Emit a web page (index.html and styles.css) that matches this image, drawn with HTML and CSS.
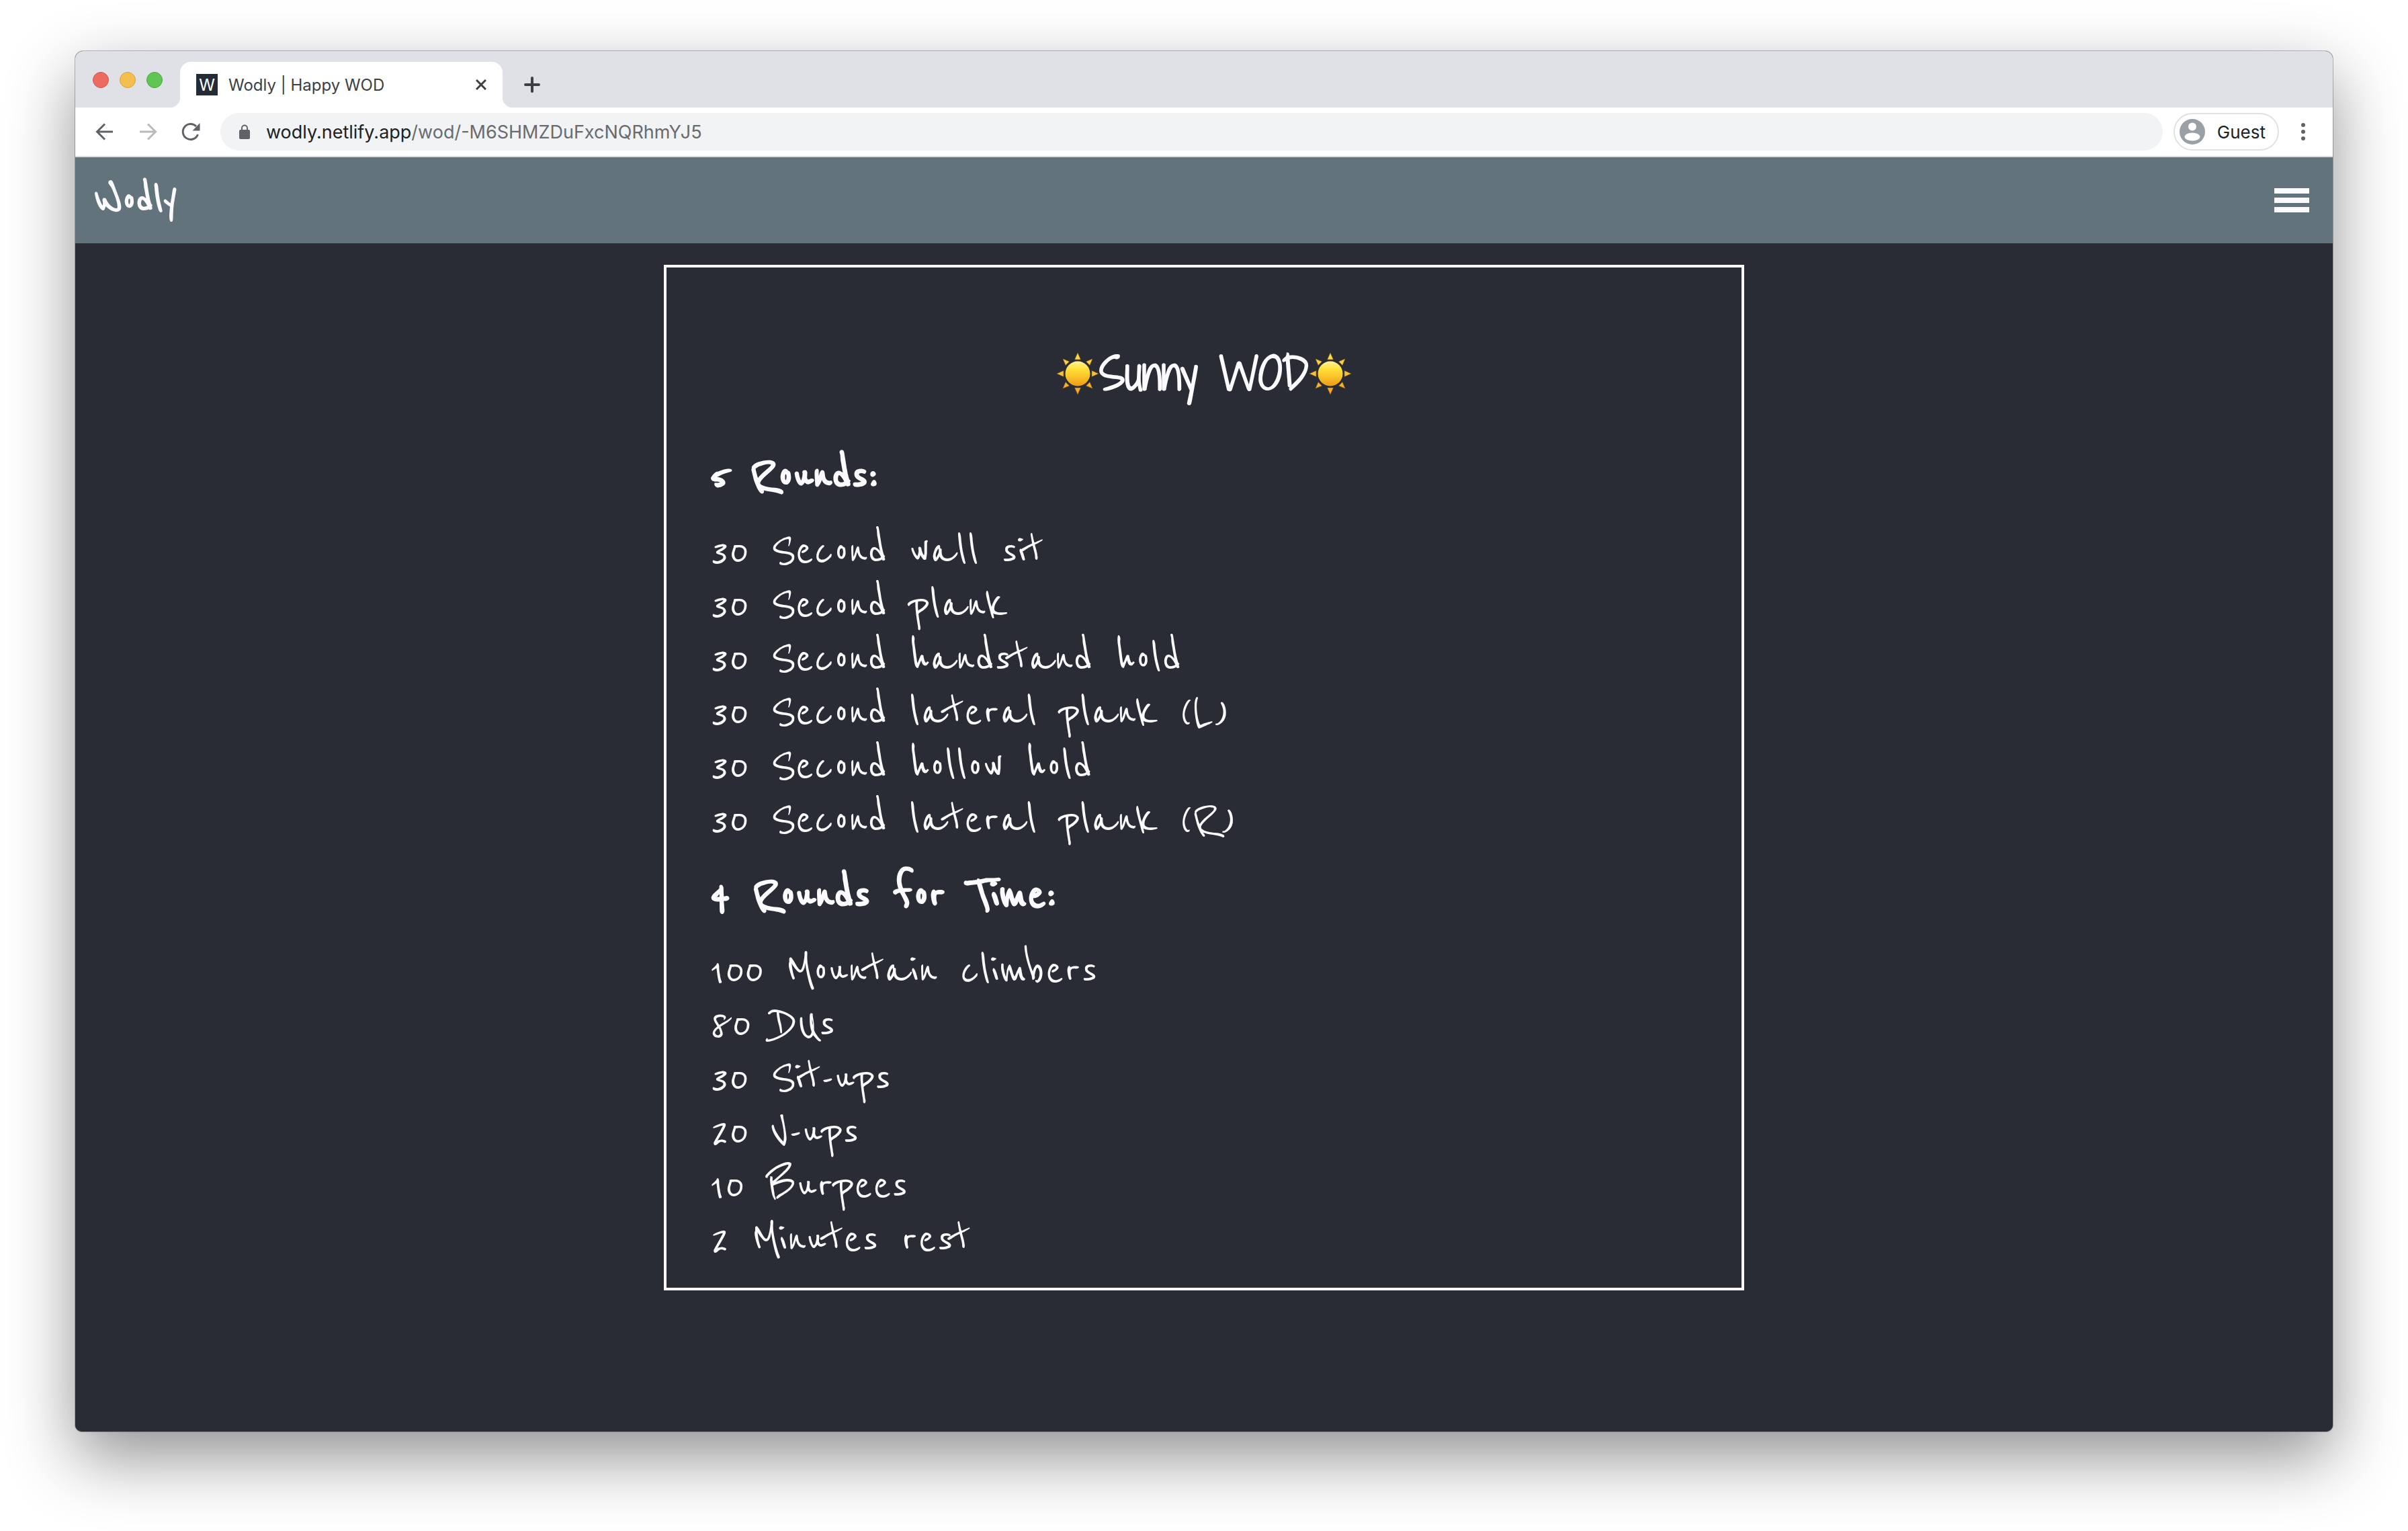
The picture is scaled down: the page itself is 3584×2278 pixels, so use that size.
FILE: index.html
```html
<!DOCTYPE html>
<html lang="en">
<head>
<meta charset="utf-8">
<title>Wodly | Happy WOD</title>
<link rel="stylesheet" href="styles.css">
</head>
<body>
<svg class="defs" aria-hidden="true">
  <defs>
    <linearGradient id="disc" x1="0" y1="0" x2="0" y2="1">
      <stop offset="0" stop-color="#fff3a0"/>
      <stop offset=".3" stop-color="#ffe13a"/>
      <stop offset=".6" stop-color="#fcc62c"/>
      <stop offset="1" stop-color="#ec9a17"/>
    </linearGradient>
    <linearGradient id="rays" gradientUnits="userSpaceOnUse" x1="0" y1="0" x2="0" y2="64">
      <stop offset="0" stop-color="#fde047"/>
      <stop offset="1" stop-color="#f3a02c"/>
    </linearGradient>
    <symbol id="sun" viewBox="0 0 64 64">
      <path fill="url(#rays)" stroke="#8a5a10" stroke-width=".6" d="M32 1l4.500 10h-9zM32 63l4.500-10h-9zM1 32l10-4.500v9zM63 32l-10-4.500v9zM10 10l9.500 4-5.500 5.500zM54 10l-9.500 4 5.500 5.500zM10 54l9.500-4-5.500-5.500zM54 54l-9.500-4 5.500-5.500z"/>
      <circle cx="32" cy="32" r="18.500" fill="url(#disc)"/>
    </symbol>
  </defs>
</svg>
<div class="window">
  <div class="tabstrip">
    <div class="lights">
      <button class="light light-close" aria-label="Close window"></button>
      <button class="light light-min" aria-label="Minimise window"></button>
      <button class="light light-max" aria-label="Zoom window"></button>
    </div>
    <div class="tab">
      <span class="favicon">W</span>
      <span class="tab-title">Wodly | Happy WOD</span>
      <button class="icon-button" aria-label="Close tab">
        <svg width="16" height="16" viewBox="0 0 16 16"><path d="M1 1l14 14M15 1L1 15" stroke="#3c4043" stroke-width="3"/></svg>
      </button>
    </div>
    <button class="icon-button new-tab" aria-label="New tab">
      <svg width="24" height="24" viewBox="0 0 24 24"><path d="M12 2v20M2 12h20" stroke="#3c4043" stroke-width="4" stroke-linecap="round"/></svg>
    </button>
  </div>
  <div class="toolbar">
    <div class="nav">
      <button class="icon-button" aria-label="Back">
        <svg width="32" height="32" viewBox="0 0 32 32"><path d="M28 16H5M16 4.500L4.500 16L16 27.500" fill="none" stroke="#5f6368" stroke-width="3"/></svg>
      </button>
      <button class="icon-button" aria-label="Forward" disabled>
        <svg width="32" height="32" viewBox="0 0 32 32"><path d="M4 16h23M16 4.500L27.500 16L16 27.500" fill="none" stroke="#bababc" stroke-width="3"/></svg>
      </button>
      <button class="icon-button" aria-label="Reload">
        <svg width="32" height="32" viewBox="0 0 32 32"><path d="M26.500 20A11.500 11.500 0 1 1 24 8" fill="none" stroke="#5f6368" stroke-width="3"/><path d="M29.500 3v11.500H18.500z" fill="#5f6368"/></svg>
      </button>
    </div>
    <div class="omnibox">
      <svg width="16" height="22" viewBox="0 0 16 22"><path d="M4 9V5.500a4 4 0 0 1 8 0V9" fill="none" stroke="#5f6368" stroke-width="2"/><rect y="8" width="16" height="14" rx="2" fill="#5f6368"/></svg>
      <a class="url" href="#">wodly.netlify.app<span class="url-path">/wod/-M6SHMZDuFxcNQRhmYJ5</span></a>
    </div>
    <button class="profile">
      <svg width="38" height="38" viewBox="0 0 38 38"><circle cx="19" cy="19" r="19" fill="#9aa0a6"/><circle cx="19" cy="11.500" r="6" fill="#fff"/><ellipse cx="19" cy="26.500" rx="11.500" ry="6" fill="#fff"/></svg>
      Guest
    </button>
    <button class="icon-button" aria-label="Menu">
      <svg width="8" height="28" viewBox="0 0 8 28" fill="#5f6368"><circle cx="4" cy="4" r="3"/><circle cx="4" cy="14" r="3"/><circle cx="4" cy="24" r="3"/></svg>
    </button>
  </div>
  <header class="app-bar">
    <a class="brand" href="#">Wodly</a>
    <button class="hamburger" aria-label="Open navigation"><span></span><span></span><span></span></button>
  </header>
  <main class="page">
    <article class="wod">
      <h1><svg class="sun"><use href="#sun"/></svg>Sunny WOD<svg class="sun"><use href="#sun"/></svg></h1>
      <section>
        <h2>5 Rounds:</h2>
        <ul>
          <li>30 Second wall sit</li>
          <li>30 Second plank</li>
          <li>30 Second handstand hold</li>
          <li>30 Second lateral plank (L)</li>
          <li>30 Second hollow hold</li>
          <li>30 Second lateral plank (R)</li>
        </ul>
      </section>
      <section>
        <h2>4 Rounds for Time:</h2>
        <ul>
          <li>100 Mountain climbers</li>
          <li>80 DUs</li>
          <li>30 Sit-ups</li>
          <li>20 V-ups</li>
          <li>10 Burpees</li>
          <li>2 Minutes rest</li>
        </ul>
      </section>
    </article>
  </main>
</div>
</body>
</html>
```
FILE: styles.css
```css
* { box-sizing: border-box; }

body {
  margin: 0;
  padding: 76px 112px 148px;
  min-height: 100vh;
  display: flex;
  background: #fff;
  font-family: Inter, "Liberation Sans", sans-serif;
}

button {
  margin: 0;
  padding: 0;
  border: 0;
  background: none;
  font: inherit;
  color: inherit;
}

a { color: inherit; text-decoration: none; }

svg { display: block; flex: none; }

.defs { position: absolute; width: 0; height: 0; }

.window {
  flex: 1;
  display: flex;
  flex-direction: column;
  border-radius: 12px 12px 10px 10px;
  overflow: hidden;
  background: #292c35;
  box-shadow: 0 0 0 1px rgba(0, 0, 0, .25), 0 38px 100px rgba(0, 0, 0, .44);
}

/* Browser tab strip */
.tabstrip {
  display: flex;
  align-items: flex-end;
  height: 84px;
  padding-left: 26px;
  background: #dfe1e6;
}

.lights {
  display: flex;
  gap: 16px;
  padding-bottom: 29px;
  margin-right: 26px;
}

.light { width: 24px; height: 24px; border-radius: 50%; }
.light-close { background: #ed6a5e; border: 1px solid #d5554a; }
.light-min { background: #f5bf4f; border: 1px solid #d9a13c; }
.light-max { background: #61c554; border: 1px solid #4ba73f; }

.tab {
  position: relative;
  display: flex;
  align-items: center;
  width: 480px;
  height: 68px;
  padding: 0 24px;
  border-radius: 16px 16px 0 0;
  background: #fff;
}

/* Outward curves at the foot of the tab */
.tab::before,
.tab::after {
  content: "";
  position: absolute;
  bottom: 0;
  width: 16px;
  height: 16px;
}
.tab::before { left: -16px; background: radial-gradient(circle at 0 0, transparent 16px, #fff 17px); }
.tab::after { right: -16px; background: radial-gradient(circle at 100% 0, transparent 16px, #fff 17px); }

.favicon {
  width: 32px;
  height: 32px;
  background: #232c36;
  color: #fff;
  font-size: 24px;
  line-height: 34px;
  text-align: center;
}

.tab-title { flex: 1; margin-left: 16px; font-size: 24px; color: #3c4043; }

.icon-button { display: flex; align-items: center; justify-content: center; }

.new-tab { height: 68px; margin-left: 32px; }

/* Browser toolbar */
.toolbar {
  display: flex;
  align-items: center;
  height: 74px;
  padding: 0 40px 0 28px;
  gap: 16px;
  background: #fff;
  border-bottom: 2px solid #d9dcdf;
}

.nav { display: flex; gap: 32px; margin-right: 12px; }

.omnibox {
  flex: 1;
  display: flex;
  align-items: center;
  gap: 24px;
  height: 56px;
  padding: 0 28px;
  border-radius: 28px;
  background: #f1f3f4;
}

.url { font-size: 27px; color: #202124; }
.url-path { color: #696b6e; }

.profile {
  display: flex;
  align-items: center;
  gap: 18px;
  height: 56px;
  padding: 0 18px 0 7px;
  margin-right: 16px;
  border: 2px solid #dfe1e3;
  border-radius: 28px;
  font-size: 26px;
  color: #202124;
}

/* Application */
.app-bar {
  display: flex;
  align-items: center;
  justify-content: space-between;
  height: 128px;
  padding: 0 35px 0 30px;
  background: #62737c;
  color: #fbfaff;
}

.brand {
  font-family: "Reenie Beanie", cursive;
  font-size: 72px;
  line-height: 80px;
  -webkit-text-stroke: 2px currentColor;
}

.hamburger { display: flex; flex-direction: column; gap: 6px; width: 52px; }
.hamburger span { height: 8px; background: #fbfaff; }

.page {
  flex: 1;
  display: flex;
  justify-content: center;
  align-items: flex-start;
  padding: 32px;
  background: #292c35;
  color: #fbfaff;
}

.wod {
  width: 1608px;
  max-width: 100%;
  padding: 98px 64px 32px;
  border: 4px solid #fbfaff;
  font-family: "Reenie Beanie", cursive;
}

h1 {
  display: flex;
  justify-content: center;
  align-items: center;
  margin: 0 0 52px;
  font-family: "Shadows Into Light Two", "Shadows Into Light", cursive;
  font-size: 64px;
  line-height: 120px;
}

.sun { width: 64px; height: 64px; }

/* The face has a single weight, so the outline makes the bold */
h2 {
  margin: 0;
  font-size: 80px;
  font-weight: normal;
  line-height: 80px;
  -webkit-text-stroke: 3px currentColor;
}

section + section h2 { margin-top: 32px; }

ul { margin: 32px 0 0; padding: 0; list-style: none; }

li { font-size: 80px; line-height: 80px; }
```
